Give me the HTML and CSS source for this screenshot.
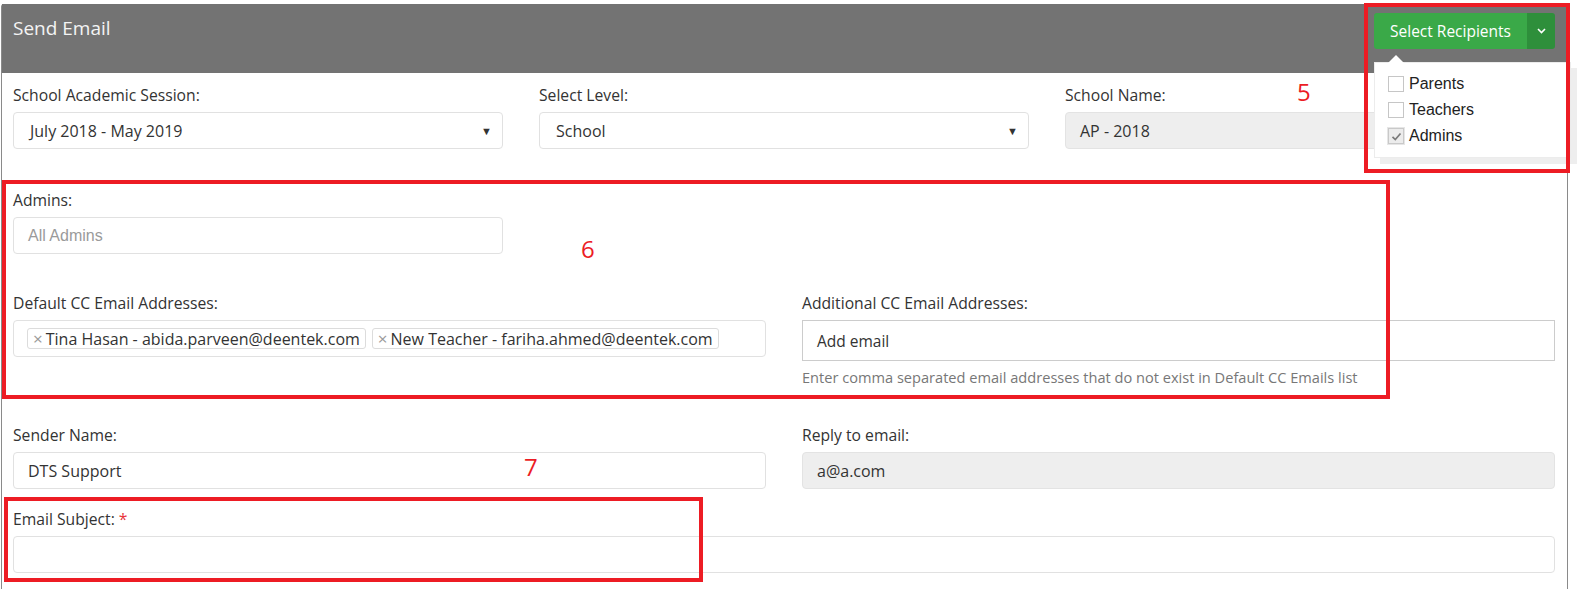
FILE: index.html
```html
<!DOCTYPE html>
<html lang="en">
<head>
<meta charset="utf-8">
<title>Send Email</title>
<link rel="stylesheet" href="styles.css">
</head>
<body>
<div class="panel">
  <div class="panel-head">
    <h1 class="title">Send Email</h1>
    <div class="btn-group">
      <button class="btn-main" type="button">Select Recipients</button>
      <button class="btn-caret" type="button" aria-label="toggle">
        <svg width="9" height="6" viewBox="0 0 9 6"><path d="M1 1 L4.5 4.5 L8 1" fill="none" stroke="#fff" stroke-width="1.6"/></svg>
      </button>
      <div class="menu">
        <span class="menu-arrow"></span>
        <label class="menu-item"><span class="cb"></span>Parents</label>
        <label class="menu-item"><span class="cb"></span>Teachers</label>
        <label class="menu-item"><span class="cb checked"><svg width="13" height="13" viewBox="0 0 13 13"><path d="M2.5 6.8 L5.3 9.5 L10.5 3.5" fill="none" stroke="#7a7a7a" stroke-width="1.7"/></svg></span>Admins</label>
      </div>
    </div>
  </div>

  <div class="panel-body">
    <div class="row cols3 row-first">
      <div class="group">
        <div class="label">School Academic Session:</div>
        <div class="field select"><span>July 2018 - May 2019</span><span class="arrow">&#9660;</span></div>
      </div>
      <div class="group">
        <div class="label">Select Level:</div>
        <div class="field select"><span>School</span><span class="arrow">&#9660;</span></div>
      </div>
      <div class="group">
        <div class="label">School Name:</div>
        <div class="field readonly"><span>AP - 2018</span></div>
      </div>
    </div>

    <div class="row cols3 row-admins">
      <div class="group">
        <div class="label">Admins:</div>
        <div class="field"><span class="placeholder">All Admins</span></div>
      </div>
    </div>

    <div class="row cols2 row-cc">
      <div class="group">
        <div class="label">Default CC Email Addresses:</div>
        <div class="field tags">
          <span class="tag"><span class="x">&times;</span>Tina Hasan - abida.parveen@deentek.com</span>
          <span class="tag"><span class="x">&times;</span>New Teacher - fariha.ahmed@deentek.com</span>
        </div>
      </div>
      <div class="group">
        <div class="label">Additional CC Email Addresses:</div>
        <div class="field square"><span class="add">Add email</span></div>
        <div class="help">Enter comma separated email addresses that do not exist in Default CC Emails list</div>
      </div>
    </div>

    <div class="row cols2 row-sender">
      <div class="group">
        <div class="label">Sender Name:</div>
        <div class="field"><span>DTS Support</span></div>
      </div>
      <div class="group">
        <div class="label">Reply to email:</div>
        <div class="field readonly"><span>a@a.com</span></div>
      </div>
    </div>

    <div class="row row-subject">
      <div class="group">
        <div class="label">Email Subject: <span class="req">*</span></div>
        <div class="field"></div>
      </div>
    </div>
  </div>
</div>

<div class="mark mark-5"></div>
<div class="mark mark-6"></div>
<div class="mark mark-7"></div>
<div class="num num-5">5</div>
<div class="num num-6">6</div>
<div class="num num-7">7</div>
</body>
</html>
```

FILE: styles.css
```css
* { box-sizing: border-box; }

body {
  margin: 0;
  background: #fff;
  font-family: "Open Sans", "Liberation Sans", sans-serif;
  color: #333;
  position: relative;
  height: 589px;
  overflow: hidden;
}

.panel {
  margin: 4px 0 0 1px;
  width: 1567px;
  height: 600px;
  border-left: 1px solid #8a8a8a;
  border-right: 1px solid #8a8a8a;
  border-top-left-radius: 3px;
}

.panel-head {
  height: 69px;
  background: #737373;
  display: flex;
  justify-content: space-between;
  align-items: flex-start;
  padding: 9px 12px 0 11px;
}

.title {
  margin: 3px 0 0 0;
  font-size: 19px;
  line-height: 25px;
  font-weight: 400;
  color: #f4f4f4;
}

.btn-group {
  position: relative;
  display: flex;
  height: 36px;
}

.btn-main {
  border: 0;
  margin: 0;
  width: 153px;
  height: 36px;
  background: #3aa948;
  color: #fff;
  font-family: "Open Sans", sans-serif;
  font-size: 15.5px;
  padding: 0;
  border-radius: 3px 0 0 3px;
}

.btn-caret {
  border: 0;
  margin: 0;
  width: 28px;
  height: 36px;
  background: #2e8f3b;
  border-radius: 0 3px 3px 0;
  display: flex;
  align-items: center;
  justify-content: center;
  padding: 0;
}

.menu {
  position: absolute;
  top: 49px;
  left: 0;
  width: 197px;
  padding: 8px 0 8px 13px;
  background: #fff;
  border: 1px solid #ececec;
  box-shadow: 6px 6px 0 #eeeeee;
  z-index: 5;
}

.menu-arrow {
  position: absolute;
  top: -8px;
  left: 13px;
  width: 0;
  height: 0;
  border-left: 8px solid transparent;
  border-right: 8px solid transparent;
  border-bottom: 8px solid #fff;
}

.menu-item {
  display: flex;
  align-items: center;
  height: 26px;
  font-family: "Liberation Sans", Arial, sans-serif;
  font-size: 16px;
  color: #222;
}

.cb {
  width: 16px;
  height: 16px;
  border: 1px solid #c6c6c6;
  background: #fff;
  margin-right: 5px;
  display: flex;
  align-items: center;
  justify-content: center;
}

.cb.checked {
  background: #ececec;
  border-color: #c9c9c9;
  box-shadow: 0 0 0 1px #e6e6e6;
}

.panel-body {
  padding: 11px 12px 0 11px;
}

.row { display: grid; column-gap: 36px; align-items: start; }
.cols3 { grid-template-columns: repeat(3, 1fr); }
.cols2 { grid-template-columns: repeat(2, 1fr); }

.row-admins { margin-top: 40px; }
.row-cc { margin-top: 38px; }
.row-sender { margin-top: 36px; }
.row-subject { margin-top: 19px; }

.label {
  font-size: 15.7px;
  line-height: 22px;
  margin-bottom: 6px;
  color: #333;
}

.req { color: #e8343a; }

.field {
  height: 37px;
  border: 1px solid #e1e1e1;
  border-radius: 4px;
  background: #fff;
  display: flex;
  align-items: center;
  padding: 0 14px;
  font-size: 16px;
  color: #333;
}

.select {
  padding: 0 10px 0 16px;
  justify-content: space-between;
}

.arrow {
  font-size: 11px;
  color: #333;
}

.readonly {
  background: #eeeeee;
  border-color: #e3e3e3;
}

.placeholder {
  font-family: "Liberation Sans", Arial, sans-serif;
  font-size: 16px;
  color: #9a9a9a;
}

.tags {
  padding: 0 0 0 13px;
  gap: 6px;
}

.tag {
  display: inline-flex;
  align-items: center;
  height: 21px;
  padding: 0 5px 0 5px;
  border: 1px solid #dcdcdc;
  border-radius: 3px;
  background: #fff;
  font-size: 16px;
  color: #333;
  white-space: nowrap;
}

.tag .x {
  color: #999;
  font-size: 17px;
  margin-right: 3px;
}

.square {
  height: 41px;
  border-radius: 0;
  border-color: #cccccc;
}

.add { font-size: 15.5px; color: #333; }

.help {
  margin-top: 5px;
  font-size: 14.6px;
  line-height: 22px;
  color: #777;
}

.mark {
  position: absolute;
  border: 4px solid #ed1c24;
  z-index: 10;
}
.mark-5 { left: 1364px; top: 3px; width: 206px; height: 170px; }
.mark-6 { left: 2px; top: 180px; width: 1388px; height: 219px; }
.mark-7 { left: 4px; top: 497px; width: 699px; height: 85px; }

.num {
  position: absolute;
  font-size: 24px;
  line-height: 24px;
  color: #ec1c24;
  z-index: 10;
}
.num-5 { left: 1297px; top: 80px; }
.num-6 { left: 581px; top: 237px; }
.num-7 { left: 524px; top: 455px; }
```
